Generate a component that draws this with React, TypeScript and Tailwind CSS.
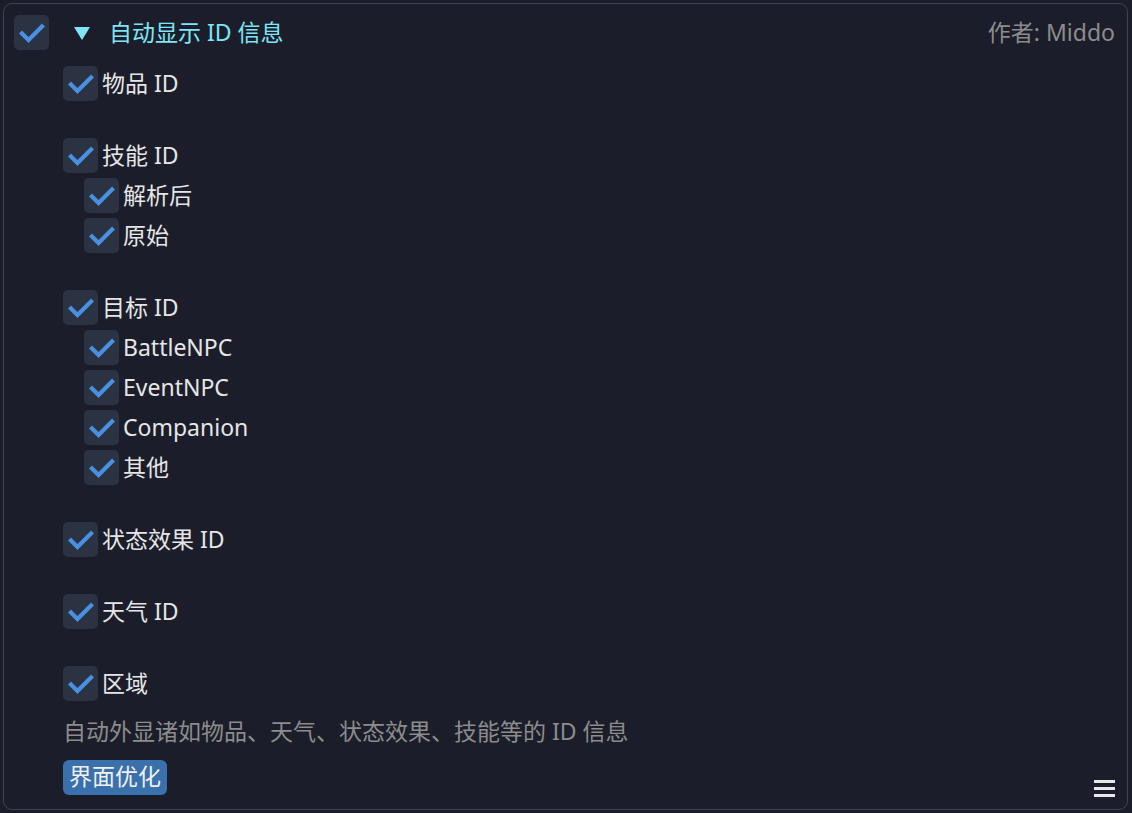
import type { ReactNode } from "react";

const font = { fontFamily: '"Noto Sans", "Noto Sans CJK SC", sans-serif' };

function Check() {
  return (
    <div className="w-[35px] h-[35px] shrink-0 rounded-[5px] bg-[#2b3242] flex items-center justify-center">
      <svg width="28" height="24" viewBox="0 0 28 24" fill="none">
        <path d="M4 12.5 L10.5 19 L24 5.5" stroke="#4a90e2" strokeWidth="4.2" strokeLinecap="square" />
      </svg>
    </div>
  );
}

function Item({ label }: { label: ReactNode }) {
  return (
    <div className="flex items-center h-[35px] gap-[4px] text-[23px] text-[#e6e6e6]">
      <Check />
      <span className="leading-none -mt-[1px]">{label}</span>
    </div>
  );
}

function Group({ label, subs }: { label: string; subs?: string[] }) {
  return (
    <div className="flex flex-col gap-[5px] mb-[37px]">
      <Item label={label} />
      {subs && (
        <div className="flex flex-col gap-[5px] pl-[21px]">
          {subs.map((s) => (
            <Item key={s} label={s} />
          ))}
        </div>
      )}
    </div>
  );
}

export default function App() {
  return (
    <div className="w-[1132px] h-[813px] bg-[#1b1e2a] p-[3px]" style={font}>
      <div className="relative h-[807px] w-[1125px] border border-[#3b4354] rounded-[9px] flex flex-col">
        <div className="flex items-center pl-[10px] pr-[12px] pt-[11px]">
          <Check />
          <svg className="ml-[24px]" width="18" height="16" viewBox="0 0 18 16">
            <polygon points="1,2 17,2 9,15" fill="#7fe5f5" />
          </svg>
          <span className="ml-[18px] text-[23px] text-[#7fe5f5] leading-none -mt-[1px]">自动显示 ID 信息</span>
          <span className="ml-auto text-[23px] text-[#8c8c8c] leading-none -mt-[1px]">作者: Middo</span>
        </div>
        <div className="flex flex-col pl-[59px] pt-[16px]">
          <Group label="物品 ID" />
          <Group label="技能 ID" subs={["解析后", "原始"]} />
          <Group label="目标 ID" subs={["BattleNPC", "EventNPC", "Companion", "其他"]} />
          <Group label="状态效果 ID" />
          <Group label="天气 ID" />
          <div className="flex flex-col">
            <Item label="区域" />
            <div className="mt-[19px] text-[23px] text-[#8c8c8c] leading-none">自动外显诸如物品、天气、状态效果、技能等的 ID 信息</div>
            <div className="mt-[17px]">
              <span className="inline-block rounded-[6px] bg-[#3a70ac] px-[6px] h-[35px] leading-[33px] text-[23px] text-[#f0f0f0]">界面优化</span>
            </div>
          </div>
        </div>
        <div className="absolute right-[12px] bottom-[12px] flex flex-col gap-[4px]">
          <div className="w-[21px] h-[3px] bg-[#e8e8e8]" />
          <div className="w-[21px] h-[3px] bg-[#e8e8e8]" />
          <div className="w-[21px] h-[3px] bg-[#e8e8e8]" />
        </div>
      </div>
    </div>
  );
}
